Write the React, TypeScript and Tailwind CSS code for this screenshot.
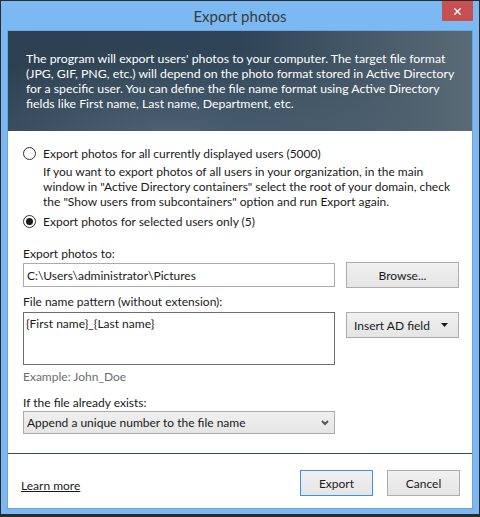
import { X } from 'lucide-react';

const font = { fontFamily: 'Lato, "Noto Sans", sans-serif' };

function Radio({ checked }: { checked?: boolean }) {
  return (
    <span className="w-[13px] h-[13px] rounded-full border border-[#333333] bg-white flex items-center justify-center shrink-0">
      {checked && <span className="w-[7px] h-[7px] rounded-full bg-[#1a1a1a]" />}
    </span>
  );
}

function Button({ children, primary, className = '' }: { children: React.ReactNode; primary?: boolean; className?: string }) {
  return (
    <button
      className={`h-[26px] bg-gradient-to-b from-[#f0f0f0] to-[#e5e5e5] border text-[12px] text-[#1a1a1a] ${
        primary ? 'border-[#3c8ff0]' : 'border-[#acacac]'
      } ${className}`}
    >
      {children}
    </button>
  );
}

export default function App() {
  return (
    <div
      className="w-[480px] h-[517px] bg-[#7cb9f3] border-x border-t border-b-[3px] border-[#2b2b2b] flex flex-col text-[12px] leading-[15px] text-[#1a1a1a]"
      style={font}
    >
      {/* Title bar */}
      <div className="h-[29px] relative flex items-center justify-center shrink-0">
        <span className="text-[15px] text-[#3a3a3a] pt-[1px]">Export photos</span>
        <div className="absolute top-0 right-[6px] w-[31px] h-[20px] bg-[#c75050] flex items-center justify-center">
          <X size={11} strokeWidth={3} className="text-white" />
        </div>
      </div>

      {/* Client area */}
      <div className="mx-[6px] h-[479px] border border-[#6aa7e0] bg-white flex flex-col">
        <div className="h-[100px] shrink-0 px-[18px] pt-[20px] text-[12.3px] text-white whitespace-nowrap bg-[radial-gradient(ellipse_at_35%_110%,rgba(120,140,155,0.45),transparent_60%),linear-gradient(90deg,#2c4051_0%,#2f4456_50%,#5a6b77_100%)]">
          The program will export users' photos to your computer. The target file format
          <br />
          (JPG, GIF, PNG, etc.) will depend on the photo format stored in Active Directory
          <br />
          for a specific user. You can define the file name format using Active Directory
          <br />
          fields like First name, Last name, Department, etc.
        </div>

        <div className="flex-1 pl-[15px] pt-[15px]">
          <div className="flex items-center gap-[7px]">
            <Radio />
            <span>Export photos for all currently displayed users (5000)</span>
          </div>
          <div className="pl-[20px] mt-[3px] whitespace-nowrap">
            If you want to export photos of all users in your organization, in the main
            <br />
            window in "Active Directory containers" select the root of your domain, check
            <br />
            the "Show users from subcontainers" option and run Export again.
          </div>
          <div className="flex items-center gap-[7px] mt-[5px]">
            <Radio checked />
            <span>Export photos for selected users only (5)</span>
          </div>

          <div className="mt-[17px]">Export photos to:</div>
          <div className="flex items-center gap-[11px] mt-[1px]">
            <div className="w-[312px] h-[24px] border border-[#ababab] flex items-center px-[3px]">
              C:\Users\administrator\Pictures
            </div>
            <Button className="w-[113px]">Browse...</Button>
          </div>

          <div className="mt-[6px]">File name pattern (without extension):</div>
          <div className="flex items-start gap-[11px] mt-[3px]">
            <div className="w-[312px] h-[53px] border border-[#6d6d6d] px-[2px] pt-[3px]">
              {'{First name}_{Last name}'}
            </div>
            <Button className="w-[113px] flex items-center justify-between pl-[7px] pr-[10px]">
              <span>Insert AD field</span>
              <svg width="7" height="4" viewBox="0 0 7 4">
                <path d="M0 0h7L3.5 4z" fill="#1a1a1a" />
              </svg>
            </Button>
          </div>

          <div className="mt-[4px] text-[#6d6d6d]">Example: John_Doe</div>

          <div className="mt-[11px]">If the file already exists:</div>
          <div className="mt-[1px] w-[312px] h-[23px] border border-[#acacac] bg-gradient-to-b from-[#f0f0f0] to-[#e5e5e5] flex items-center justify-between pl-[3px] pr-[5px]">
            <span>Append a unique number to the file name</span>
            <svg width="8" height="6" viewBox="0 0 8 6">
              <path d="M1 1l3 3 3-3" stroke="#555555" strokeWidth="2" fill="none" />
            </svg>
          </div>
        </div>

        <div className="h-px bg-[#3b4954] shrink-0" />

        <div className="h-[54px] shrink-0 flex items-start justify-between pl-[13px] pr-[12px] pt-[16px]">
          <a href="#" className="underline mt-[8px] text-[#1a1a1a]">
            Learn more
          </a>
          <div className="flex gap-[14px]">
            <Button primary className="w-[73px]">Export</Button>
            <Button className="w-[73px]">Cancel</Button>
          </div>
        </div>
      </div>
    </div>
  );
}
